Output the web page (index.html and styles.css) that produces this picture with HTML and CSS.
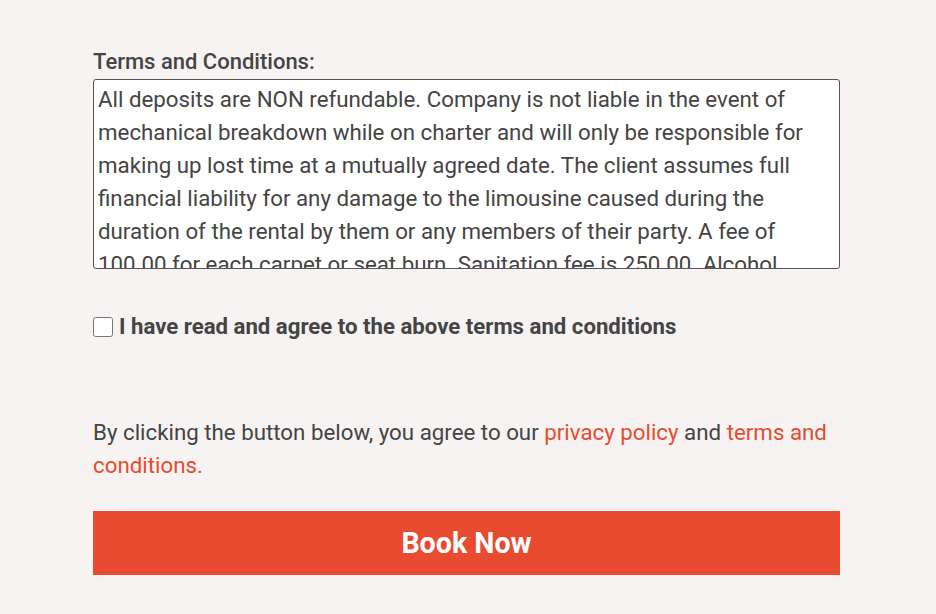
FILE: index.html
```html
<!DOCTYPE html>
<html lang="en">
<head>
    <meta charset="UTF-8">
    <meta name="viewport" content="width=device-width, initial-scale=1.0">
    <title>Booking - Terms</title>
    <link rel="stylesheet" href="styles.css">
</head>
<body>
    <main class="booking">
        <form class="terms-form">
            <label for="terms" class="field-label">Terms and Conditions:</label>
            <textarea id="terms" class="terms-box" readonly>All deposits are NON refundable. Company is not liable in the event of mechanical breakdown while on charter and will only be responsible for making up lost time at a mutually agreed date. The client assumes full financial liability for any damage to the limousine caused during the duration of the rental by them or any members of their party. A fee of 100.00 for each carpet or seat burn. Sanitation fee is 250.00. Alcohol consumption by minors is strictly prohibited.</textarea>

            <div class="agree-row">
                <input type="checkbox" id="agree">
                <label for="agree">I have read and agree to the above terms and conditions</label>
            </div>

            <p class="notice">By clicking the button below, you agree to our <a href="#">privacy policy</a> and <a href="#">terms and conditions.</a></p>

            <button type="submit" class="book-btn">Book Now</button>
        </form>
    </main>
</body>
</html>
```

FILE: styles.css
```css
body {
    font-family: Roboto, "Liberation Sans", sans-serif;
    margin: 0;
    padding: 0;
    background-color: #f7f3f2;
    color: #444;
}
.booking {
    width: 747px;
    margin-left: 93px;
    padding-top: 47px;
}
.terms-form {
    display: flex;
    flex-direction: column;
}
.field-label {
    font-size: 22px;
    font-weight: 500;
    line-height: 29px;
    margin-bottom: 3px;
}
.terms-box {
    box-sizing: border-box;
    width: 100%;
    height: 190px;
    padding: 3px 4px;
    font-family: Roboto, "Liberation Sans", sans-serif;
    font-size: 22.3px;
    line-height: 33px;
    color: #444;
    background: white;
    border: 1px solid #555;
    border-radius: 3px;
    resize: none;
    overflow: hidden;
}
.agree-row {
    display: flex;
    align-items: center;
    gap: 6px;
    margin-top: 43px;
    font-size: 22.2px;
    font-weight: 700;
    line-height: 29px;
}
.agree-row input {
    width: 20px;
    height: 20px;
    margin: 0;
}
.notice {
    font-size: 22.3px;
    line-height: 33px;
    margin: 75px 0 29px;
}
.notice a {
    color: #e84b30;
    text-decoration: none;
}
.book-btn {
    height: 64px;
    background-color: #e84b30;
    color: white;
    border: none;
    font-family: Roboto, "Liberation Sans", sans-serif;
    font-size: 28.6px;
    font-weight: 700;
    cursor: pointer;
}
```
